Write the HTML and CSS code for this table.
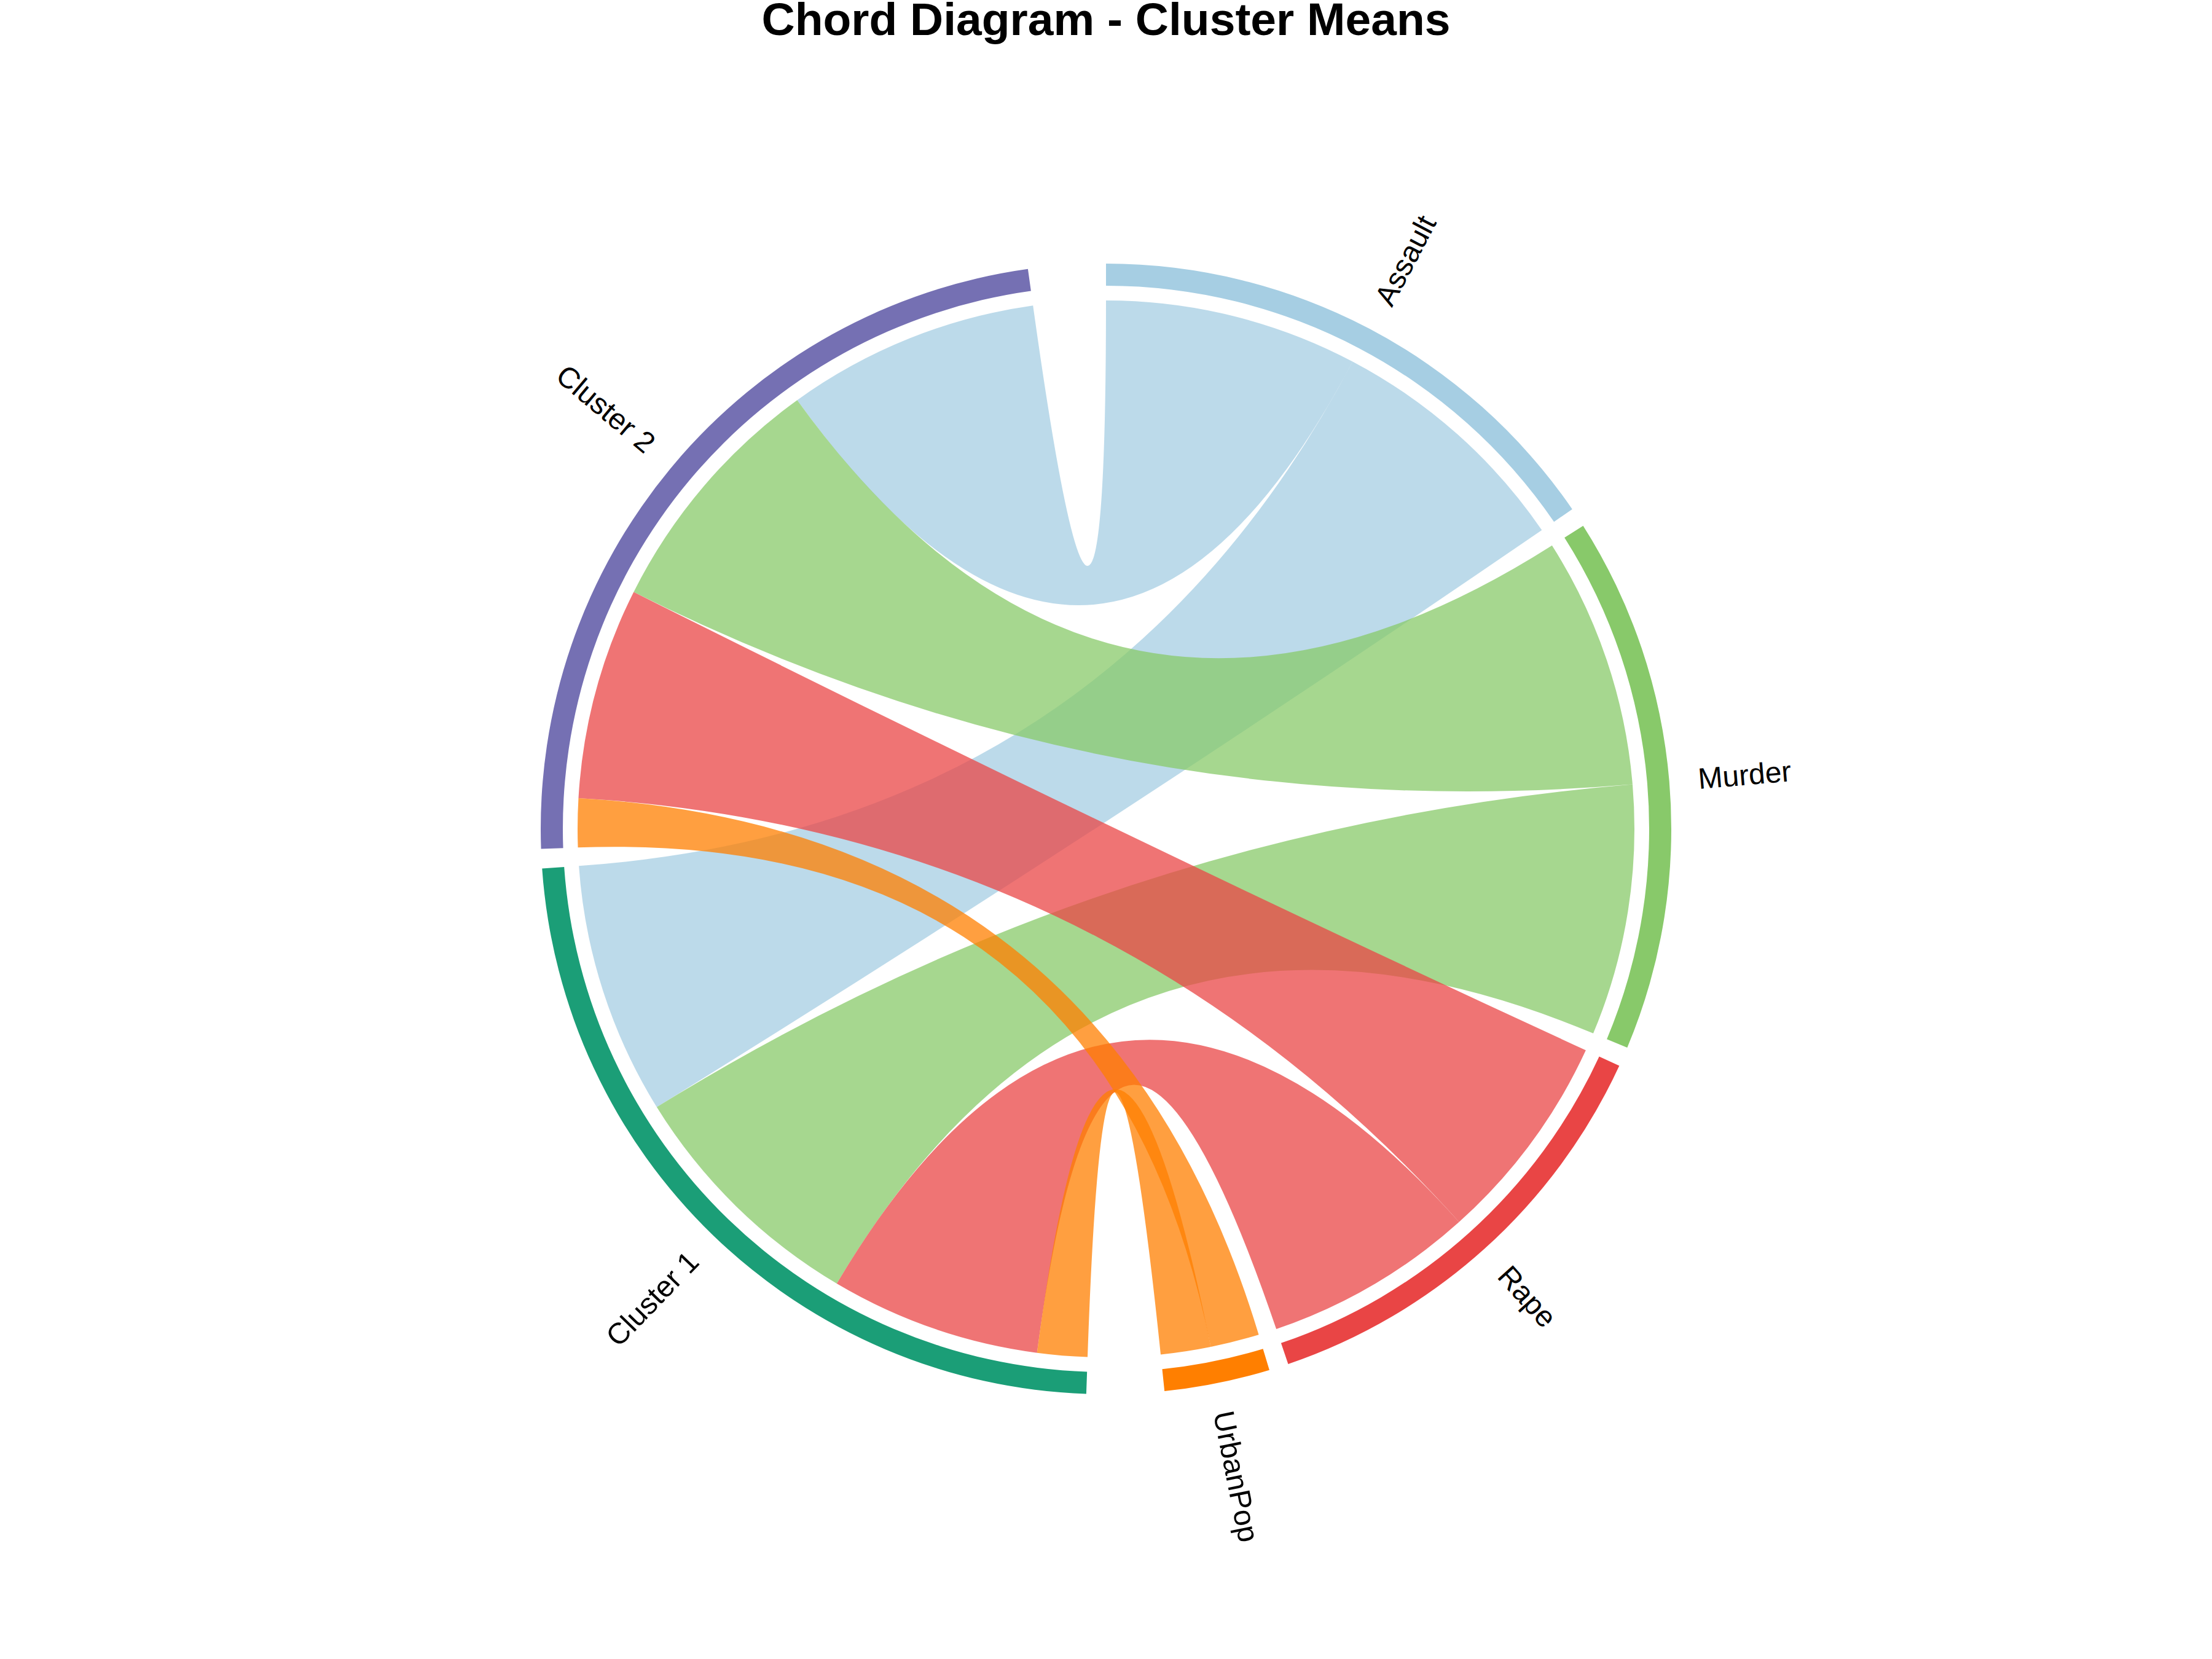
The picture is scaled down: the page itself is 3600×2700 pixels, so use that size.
FILE: index.html
```html
<!DOCTYPE html>
<html lang="en">
<head>
<meta charset="utf-8">
<title>Chord Diagram - Cluster Means</title>
<link rel="stylesheet" href="styles.css">
</head>
<body>
<div class="page">
  <h1 class="title">Chord Diagram - Cluster Means</h1>
  <svg class="chord" id="chord" width="3600" height="2638" viewBox="0 62 3600 2638" xmlns="http://www.w3.org/2000/svg">
    <g id="links"></g>
    <g id="rings"></g>
    <g class="labels">
      <text class="label" transform="translate(1800 1349) rotate(-62.215) translate(967 0)">Assault</text>
      <text class="label" transform="translate(1800 1349) rotate(-4.83) translate(967 0)">Murder</text>
      <text class="label" transform="translate(1800 1349) rotate(47.985) translate(967 0)">Rape</text>
      <text class="label" transform="translate(1800 1349) rotate(78.63) translate(967 0)">UrbanPop</text>
      <text class="label label-end" transform="translate(1800 1349) rotate(-46.01) translate(-967 0)">Cluster 1</text>
      <text class="label label-end" transform="translate(1800 1349) rotate(40.02) translate(-967 0)">Cluster 2</text>
    </g>
  </svg>
</div>
<script src="script.js"></script>
</body>
</html>
```

FILE: styles.css
```css
html, body {
  margin: 0;
  padding: 0;
  background: #ffffff;
}

.page {
  width: 3600px;
  height: 2700px;
  display: flex;
  flex-direction: column;
  overflow: hidden;
  background: #ffffff;
}

.title {
  flex: none;
  margin: 0;
  height: 62px;
  font-family: "Liberation Sans", Arial, sans-serif;
  font-weight: 700;
  font-size: 75px;
  line-height: 62px;
  text-align: center;
  color: #000000;
}

.chord {
  display: block;
  flex: none;
}

.label {
  font-family: "Liberation Sans", Arial, sans-serif;
  font-size: 48px;
  fill: #000000;
  dominant-baseline: central;
}

.label-end {
  text-anchor: end;
}

.link {
  fill-opacity: 0.75;
  stroke: none;
}

.ring {
  stroke: none;
}

.c-assault { fill: #a6cee3; }
.c-murder { fill: #88c96a; }
.c-rape { fill: #e94545; }
.c-urbanpop { fill: #ff7f00; }
.c-cluster1 { fill: #1b9e77; }
.c-cluster2 { fill: #7570b3; }
```

FILE: script.js
```javascript
(function () {
  var NS = "http://www.w3.org/2000/svg";
  var CX = 1800, CY = 1349;
  var RL = 860;   // link radius
  var R1 = 884;   // ring inner radius
  var R2 = 920;   // ring outer radius
  var GAP = 2;

  // value (in degrees) of each link: [Cluster 2, Cluster 1]
  var cols = [
    { key: "assault", v2: 27.82, v1: 27.75 },
    { key: "murder", v2: 27.6, v1: 27.6 },
    { key: "rape", v2: 23.3, v1: 23.13 },
    { key: "urbanpop", v2: 5.36, v1: 5.5 }
  ];

  function pt(r, a) {
    var t = a * Math.PI / 180;
    return (CX + r * Math.cos(t)).toFixed(2) + " " + (CY + r * Math.sin(t)).toFixed(2);
  }

  function arcPath(r, a0, a1) {
    var large = (a1 - a0) > 180 ? 1 : 0;
    return "A " + r + " " + r + " 0 " + large + " 1 " + pt(r, a1);
  }

  function ringPath(a0, a1) {
    var large = (a1 - a0) > 180 ? 1 : 0;
    return "M " + pt(R2, a0) + " " + arcPath(R2, a0, a1) +
      " L " + pt(R1, a1) + " A " + R1 + " " + R1 + " 0 " + large + " 0 " + pt(R1, a0) + " Z";
  }

  function ribbon(as, ae, bs, be) {
    var c = CX + " " + CY;
    return "M " + pt(RL, as) + " " + arcPath(RL, as, ae) +
      " Q " + c + " " + pt(RL, bs) + " " + arcPath(RL, bs, be) +
      " Q " + c + " " + pt(RL, as) + " Z";
  }

  // layout columns
  var start = -90;
  var sectors = [];
  cols.forEach(function (c) {
    c.a2 = [start, start + c.v2];
    c.a1 = [start + c.v2, start + c.v2 + c.v1];
    c.e = start + c.v2 + c.v1;
    sectors.push({ key: c.key, s: start, e: c.e });
    start = c.e + GAP;
  });

  // layout rows: Cluster 1 then Cluster 2, items in reverse column order
  var pos = 92.0;
  var c1s = pos;
  for (var i = cols.length - 1; i >= 0; i--) {
    cols[i].b1 = [pos, pos + cols[i].v1];
    pos += cols[i].v1;
  }
  sectors.push({ key: "cluster1", s: c1s, e: pos });
  pos += GAP;
  var c2s = pos;
  for (var j = cols.length - 1; j >= 0; j--) {
    cols[j].b2 = [pos, pos + cols[j].v2];
    pos += cols[j].v2;
  }
  sectors.push({ key: "cluster2", s: c2s, e: pos });

  var links = document.getElementById("links");
  cols.forEach(function (c) {
    [[c.a2, c.b2], [c.a1, c.b1]].forEach(function (pair) {
      var p = document.createElementNS(NS, "path");
      p.setAttribute("class", "link c-" + c.key);
      p.setAttribute("d", ribbon(pair[0][0], pair[0][1], pair[1][0], pair[1][1]));
      links.appendChild(p);
    });
  });

  var rings = document.getElementById("rings");
  sectors.forEach(function (s) {
    var p = document.createElementNS(NS, "path");
    p.setAttribute("class", "ring c-" + s.key);
    p.setAttribute("d", ringPath(s.s, s.e));
    rings.appendChild(p);
  });
})();
```
